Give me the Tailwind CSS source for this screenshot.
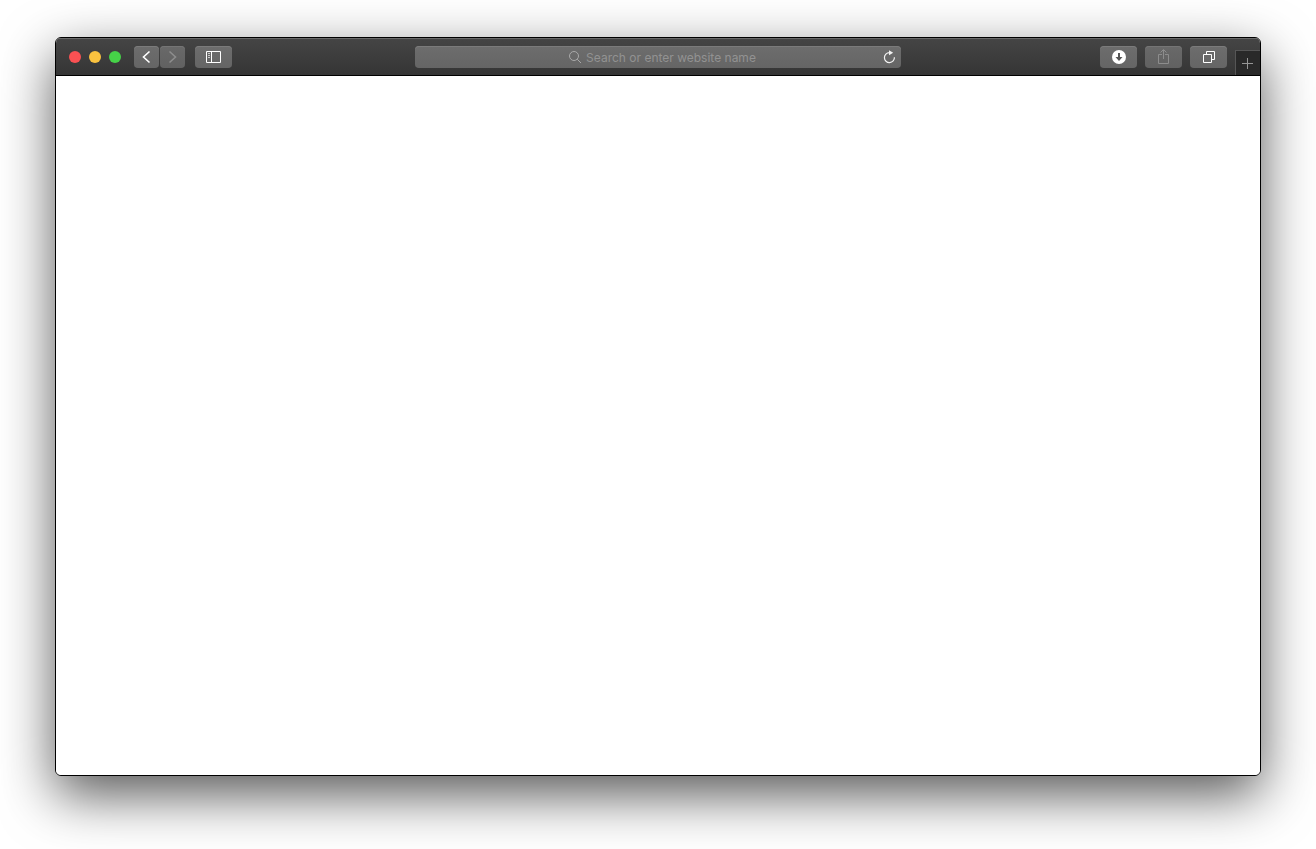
<!DOCTYPE html>
<html lang="en">
<head>
    <meta charset="UTF-8">
    <meta name="viewport" content="width=device-width, initial-scale=1.0">
    <title>Browser</title>
    <script src="https://cdn.jsdelivr.net/npm/@tailwindcss/browser@4"></script>
</head>
<body class="bg-white font-['Inter',sans-serif]">
<div class="min-h-screen flex px-[55px] pt-[37px] pb-[73px]">
    <div class="flex-1 flex flex-col overflow-hidden rounded-md border border-black bg-white shadow-[0_19px_54px_rgba(0,0,0,0.66)]">
        <!-- Toolbar -->
        <header class="h-[38px] shrink-0 grid grid-cols-[1fr_minmax(0,486px)_1fr] items-center border-b border-black bg-linear-to-b from-[#454545] to-[#353535] shadow-[inset_0_1px_0_#696969]">
            <div class="flex items-center pl-[13px]">
                <div class="flex gap-2">
                    <button type="button" aria-label="Close" class="size-3 rounded-full bg-[#fa5153]"></button>
                    <button type="button" aria-label="Minimize" class="size-3 rounded-full bg-[#fac23f]"></button>
                    <button type="button" aria-label="Zoom" class="size-3 rounded-full bg-[#46d248]"></button>
                </div>
                <div class="flex gap-px ml-[13px]">
                    <button type="button" aria-label="Back" class="w-[25px] h-[22px] rounded bg-linear-to-b from-[#6d6d6d] to-[#656565] shadow-[inset_0_1px_0_#7b7b7b]">
                        <svg class="w-[25px] h-[22px]" viewBox="0 0 25 22" fill="none" stroke="#fff" stroke-width="1.6">
                            <path d="M15.5 5.5L9.5 11l6 5.5"/>
                        </svg>
                    </button>
                    <button type="button" aria-label="Forward" disabled class="w-[25px] h-[22px] rounded bg-linear-to-b from-[#696969] to-[#616161] shadow-[inset_0_1px_0_#757575]">
                        <svg class="w-[25px] h-[22px]" viewBox="0 0 25 22" fill="none" stroke="#8d8d8d" stroke-width="1.6">
                            <path d="M9.5 5.5l6 5.5-6 5.5"/>
                        </svg>
                    </button>
                </div>
                <button type="button" aria-label="Show sidebar" class="w-[37px] h-[22px] ml-2.5 rounded bg-linear-to-b from-[#6d6d6d] to-[#656565] shadow-[inset_0_1px_0_#7b7b7b]">
                    <svg class="w-[37px] h-[22px]" viewBox="0 0 37 22" fill="none" stroke="#fff">
                        <path d="M11.5 5.5h14v11h-14zM16.5 5.5v11"/>
                        <path d="M13 7.5h2M13 9.5h2M13 11.5h2" stroke="#ccc"/>
                    </svg>
                </button>
            </div>

            <form class="relative h-[22px] flex items-center justify-center gap-1 pl-2 rounded bg-linear-to-b from-[#6d6d6d] to-[#656565] shadow-[inset_0_1px_0_#7b7b7b]">
                <label for="address" aria-label="Address">
                    <svg class="size-[14px]" viewBox="0 0 14 14" fill="none" stroke="#a9a9a9">
                        <circle cx="6" cy="6" r="4.5"/>
                        <path d="M9.2 9.2l3.8 3.8"/>
                    </svg>
                </label>
                <input type="text" id="address" name="address" placeholder="Search or enter website name"
                       class="field-sizing-content h-[22px] pt-0.5 text-[12px] leading-5 text-white placeholder:text-[#929292] focus:outline-none">
                <button type="submit" aria-label="Reload" class="absolute right-0 top-0 size-[22px]">
                    <svg class="size-[22px]" viewBox="0 0 22 22" fill="none" stroke="#f2f2f2" stroke-width="1.2">
                        <path d="M10.500 6.600a5 5 0 1 0 4.900 4.600"/>
                        <path d="M10 4.200v5l4.200-2.500z" fill="#f2f2f2" stroke="none"/>
                    </svg>
                </button>
            </form>

            <div class="h-full flex justify-end items-center">
                <div class="flex gap-2 mr-2">
                    <button type="button" aria-label="Downloads" class="w-[37px] h-[22px] rounded bg-linear-to-b from-[#6d6d6d] to-[#656565] shadow-[inset_0_1px_0_#7b7b7b]">
                        <svg class="w-[37px] h-[22px]" viewBox="0 0 37 22" fill="none">
                            <circle cx="19" cy="11" r="7" fill="#fff"/>
                            <path d="M18 7h2v4h2.5L19 15l-3.500-4H18z" fill="#555"/>
                        </svg>
                    </button>
                    <button type="button" aria-label="Share" disabled class="w-[37px] h-[22px] rounded bg-linear-to-b from-[#696969] to-[#616161] shadow-[inset_0_1px_0_#757575]">
                        <svg class="w-[37px] h-[22px]" viewBox="0 0 37 22" fill="none" stroke="#8d8d8d">
                            <path d="M17 8.500h-3.500v9h10v-9H20M18.500 13V4M15.500 6.500l3-3 3 3"/>
                        </svg>
                    </button>
                    <button type="button" aria-label="Show all tabs" class="w-[37px] h-[22px] rounded bg-linear-to-b from-[#6d6d6d] to-[#656565] shadow-[inset_0_1px_0_#7b7b7b]">
                        <svg class="w-[37px] h-[22px]" viewBox="0 0 37 22" fill="none" stroke="#fff">
                            <path d="M13.500 8.500h8v8h-8zM16.500 8V5.500h8v8H22"/>
                        </svg>
                    </button>
                </div>
                <button type="button" aria-label="New tab" class="w-[25px] h-[25px] self-end border-l border-t border-[#565656] bg-[#292929]">
                    <svg class="size-6" viewBox="0 0 24 24" fill="none" stroke="#969696">
                        <path d="M11.500 7v11M6 12.500h11"/>
                    </svg>
                </button>
            </div>
        </header>

        <main class="flex-1 bg-white"></main>
    </div>
</div>
</body>
</html>
